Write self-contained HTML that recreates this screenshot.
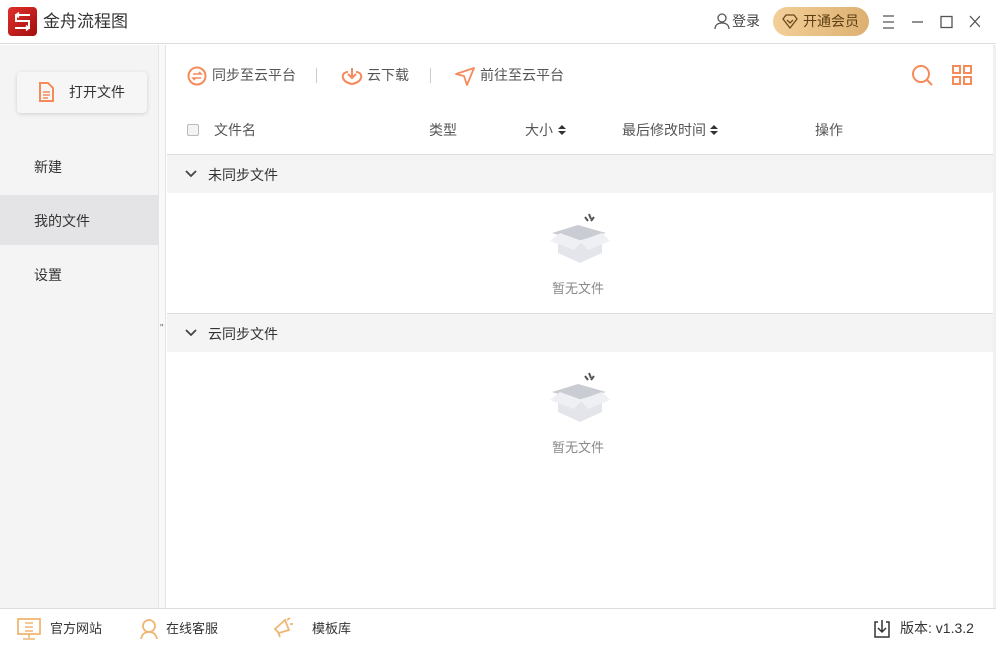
<!DOCTYPE html>
<html><head><meta charset="utf-8"><style>
*{margin:0;padding:0;box-sizing:border-box}
body{width:996px;height:646px;overflow:hidden;background:#fff;font-family:"Liberation Sans","Noto Sans CJK SC",sans-serif;font-size:14px;color:#333;position:relative}
.abs{position:absolute}
.t{white-space:nowrap;line-height:18px}
</style></head><body>
<div class="abs" style="left:0;top:0;width:996px;height:44px;border-bottom:1px solid #ddd;background:#fff"></div>
<div class="abs" style="left:8px;top:7px;width:29px;height:29px;border-radius:4px;background:linear-gradient(135deg,#e0302a,#a30e10)">
<svg width="29" height="29" viewBox="0 0 29 29"><path d="M22 8H8v6h13v7H7" stroke="#fff" stroke-width="2" fill="none"/><path d="M11 5.5L8 8l3 2.5M18 18.5l3 2.5-3 2.5" stroke="#fff" stroke-width="1.5" fill="none"/></svg></div>
<div class="abs t" style="left:43px;top:12px;font-size:17px;line-height:20px;color:#333">金舟流程图</div>
<svg class="abs" style="left:713px;top:12px" width="18" height="18" viewBox="0 0 18 18"><circle cx="9" cy="6" r="4" fill="none" stroke="#555" stroke-width="1.3"/><path d="M2 17c0-4 3-6 7-6s7 2 7 6" fill="none" stroke="#555" stroke-width="1.3"/></svg>
<div class="abs t" style="left:732px;top:12px;color:#444">登录</div>
<div class="abs" style="left:773px;top:7px;width:96px;height:29px;border-radius:15px;background:linear-gradient(90deg,#f3cf99,#ddb071)"></div>
<svg class="abs" style="left:782px;top:14px" width="16" height="15" viewBox="0 0 16 15"><path d="M4 1h8l3 4-7 9-7-9z M5 6l3 3 3-3" fill="none" stroke="#6b4a1a" stroke-width="1.3"/></svg>
<div class="abs t" style="left:803px;top:12px;color:#5a3e12">开通会员</div>
<svg class="abs" style="left:880px;top:14px" width="100" height="16" viewBox="0 0 100 16"><path d="M3 2h11M3 8h11M3 14h11" stroke="#555" stroke-width="1.3"/><path d="M32 8h11" stroke="#555" stroke-width="1.3"/><rect x="61" y="2.5" width="11" height="11" fill="none" stroke="#555" stroke-width="1.3"/><path d="M90 2l10 11M100 2l-10 11" stroke="#555" stroke-width="1.3"/></svg>
<div class="abs" style="left:0;top:45px;width:158px;height:563px;background:#f4f4f4"></div>
<div class="abs" style="left:158px;top:45px;width:8px;height:563px;background:#f9f9f9;border-left:1px solid #e4e4e4;border-right:1px solid #e4e4e4"></div>
<div class="abs t" style="left:160px;top:320px;font-size:10px;color:#666">"</div>
<div class="abs" style="left:17px;top:72px;width:130px;height:41px;background:#f6f6f6;border-radius:4px;box-shadow:0 1px 4px rgba(0,0,0,.15)"></div>
<svg class="abs" style="left:38px;top:82px" width="17" height="20" viewBox="0 0 17 20"><path d="M2 1h8l5 5v13H2z" fill="none" stroke="#f58a5a" stroke-width="2"/><path d="M5 10h7M5 13h7M5 16h5" stroke="#f58a5a" stroke-width="1.5"/></svg>
<div class="abs t" style="left:69px;top:83px;color:#333">打开文件</div>
<div class="abs t" style="left:34px;top:158px">新建</div>
<div class="abs" style="left:0;top:195px;width:158px;height:50px;background:#e4e4e6"></div>
<div class="abs t" style="left:34px;top:212px">我的文件</div>
<div class="abs t" style="left:34px;top:266px">设置</div>
<svg class="abs" style="left:187px;top:66px" width="20" height="20" viewBox="0 0 20 20"><circle cx="10" cy="10" r="8.5" fill="none" stroke="#f58a5a" stroke-width="2"/><path d="M6 8h8l-2-2M14 12H6l2 2" fill="none" stroke="#f58a5a" stroke-width="1.6"/></svg>
<div class="abs t" style="left:212px;top:66px;color:#555">同步至云平台</div>
<div class="abs" style="left:316px;top:68px;width:1px;height:15px;background:#ccc"></div>
<svg class="abs" style="left:341px;top:66px" width="22" height="20" viewBox="0 0 22 20"><path d="M7 6C3 6 1 9 2 12s4 5 9 6c5-1 8-3 9-6s-1-6-5-6" fill="none" stroke="#f58a5a" stroke-width="2"/><path d="M11 2v10M7 8l4 4 4-4" fill="none" stroke="#f58a5a" stroke-width="2"/></svg>
<div class="abs t" style="left:367px;top:66px;color:#555">云下载</div>
<div class="abs" style="left:430px;top:68px;width:1px;height:15px;background:#ccc"></div>
<svg class="abs" style="left:454px;top:66px" width="22" height="20" viewBox="0 0 22 20"><path d="M2 8L20 2 13 19 10 10z" fill="none" stroke="#f58a5a" stroke-width="1.8" stroke-linejoin="round"/></svg>
<div class="abs t" style="left:480px;top:66px;color:#555">前往至云平台</div>
<svg class="abs" style="left:911px;top:64px" width="24" height="24" viewBox="0 0 24 24"><circle cx="10" cy="10" r="8" fill="none" stroke="#f58a5a" stroke-width="2"/><path d="M16 16l5 5" stroke="#f58a5a" stroke-width="2"/></svg>
<svg class="abs" style="left:951px;top:65px" width="22" height="20" viewBox="0 0 22 20"><g fill="none" stroke="#f58a5a" stroke-width="2"><rect x="2" y="1" width="7" height="7"/><rect x="13" y="1" width="7" height="7"/><rect x="2" y="12" width="7" height="7"/><rect x="13" y="12" width="7" height="7"/></g></svg>
<div class="abs" style="left:187px;top:124px;width:12px;height:12px;border:1px solid #bbb;border-radius:2px;background:#f3f3f3"></div>
<div class="abs t" style="left:214px;top:121px;color:#555">文件名</div>
<div class="abs t" style="left:429px;top:121px;color:#555">类型</div>
<div class="abs t" style="left:525px;top:121px;color:#555">大小</div>
<svg class="abs" style="left:557px;top:124px" width="10" height="12"><path d="M1 5L5 1 9 5zM1 7l4 4 4-4z" fill="#333"/></svg>
<div class="abs t" style="left:622px;top:121px;color:#555">最后修改时间</div>
<svg class="abs" style="left:709px;top:124px" width="10" height="12"><path d="M1 5L5 1 9 5zM1 7l4 4 4-4z" fill="#333"/></svg>
<div class="abs t" style="left:815px;top:121px;color:#555">操作</div>
<div class="abs" style="left:167px;top:154px;width:826px;height:39px;background:#f4f4f4;border-top:1px solid #ddd"></div>
<svg class="abs" style="left:185px;top:170px" width="12" height="8"><path d="M1 1l5 5 5-5" fill="none" stroke="#444" stroke-width="1.8"/></svg>
<div class="abs t" style="left:208px;top:166px;color:#333">未同步文件</div>
<div class="abs" style="left:167px;top:313px;width:826px;height:39px;background:#f4f4f4;border-top:1px solid #ddd"></div>
<svg class="abs" style="left:185px;top:329px" width="12" height="8"><path d="M1 1l5 5 5-5" fill="none" stroke="#444" stroke-width="1.8"/></svg>
<div class="abs t" style="left:208px;top:325px;color:#333">云同步文件</div>
<svg class="abs" style="left:548px;top:211px" width="64" height="56" viewBox="0 0 64 56"><path d="M41 3l2 5M46 6l-3 4M37 6l3 4" stroke="#555" stroke-width="2"/><path d="M4 22l26-8 28 8-28 8z" fill="#c9ccd2"/><path d="M10 24v18l22 10 22-10V24L32 32z" fill="#e3e5ea"/><path d="M2 30l10-8 22 8-8 9z" fill="#eef0f3"/><path d="M62 30l-8-8-22 8 8 9z" fill="#eef0f3"/></svg>
<div class="abs t" style="left:552px;top:280px;font-size:13px;color:#888">暂无文件</div>
<svg class="abs" style="left:548px;top:370px" width="64" height="56" viewBox="0 0 64 56"><path d="M41 3l2 5M46 6l-3 4M37 6l3 4" stroke="#555" stroke-width="2"/><path d="M4 22l26-8 28 8-28 8z" fill="#c9ccd2"/><path d="M10 24v18l22 10 22-10V24L32 32z" fill="#e3e5ea"/><path d="M2 30l10-8 22 8-8 9z" fill="#eef0f3"/><path d="M62 30l-8-8-22 8 8 9z" fill="#eef0f3"/></svg>
<div class="abs t" style="left:552px;top:439px;font-size:13px;color:#888">暂无文件</div>
<div class="abs" style="left:993px;top:45px;width:3px;height:563px;background:#f0f0f0"></div>
<div class="abs" style="left:0;top:608px;width:996px;height:1px;background:#ddd"></div>
<svg class="abs" style="left:17px;top:618px" width="24" height="22" viewBox="0 0 24 22"><rect x="1" y="1" width="22" height="15" fill="none" stroke="#f0b670" stroke-width="1.8"/><path d="M8 5h8M8 9h8M8 13h8M12 16v4M6 21h12" stroke="#f0b670" stroke-width="1.6"/></svg>
<div class="abs t" style="left:50px;top:620px;font-size:13px;color:#333">官方网站</div>
<svg class="abs" style="left:139px;top:618px" width="20" height="22" viewBox="0 0 20 22"><circle cx="10" cy="8" r="6" fill="none" stroke="#f0b670" stroke-width="1.8"/><path d="M2 21c1-5 4-7 8-7s7 2 8 7" fill="none" stroke="#f0b670" stroke-width="1.8"/></svg>
<div class="abs t" style="left:166px;top:620px;font-size:13px;color:#333">在线客服</div>
<svg class="abs" style="left:272px;top:617px" width="22" height="22" viewBox="0 0 22 22"><path d="M3 12l10-9 4 10-10 3zM6 15l2 5M15 3l3-2M18 7l3 0" fill="none" stroke="#f0b670" stroke-width="1.8"/></svg>
<div class="abs t" style="left:312px;top:620px;font-size:13px;color:#333">模板库</div>
<svg class="abs" style="left:873px;top:619px" width="18" height="20" viewBox="0 0 18 20"><path d="M5 3H2v15h14V3h-3M9 1v12M5 9l4 4 4-4" fill="none" stroke="#333" stroke-width="1.5"/></svg>
<div class="abs t" style="left:900px;top:619px;font-size:14px;color:#333">版本: v1.3.2</div>
</body></html>
